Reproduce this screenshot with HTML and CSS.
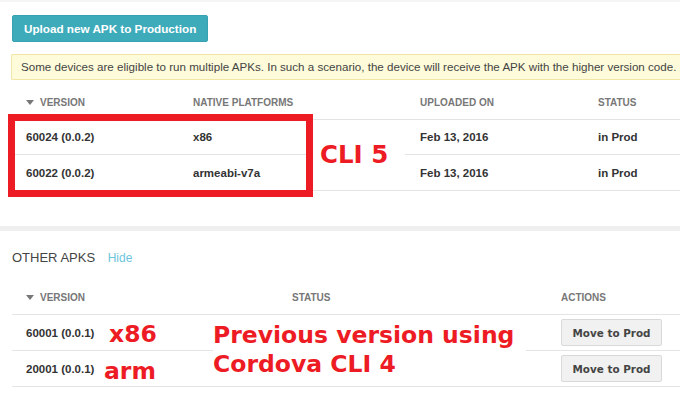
FILE: index.html
```html
<!DOCTYPE html>
<html lang="en">
<head>
  <meta charset="UTF-8">
  <title>APK</title>
  <link rel="stylesheet" href="styles.css">
</head>
<body>
  <div class="section">
    <button class="upload-btn">Upload new APK to Production</button>
    <div class="notice">Some devices are eligible to run multiple APKs. In such a scenario, the device will receive the APK with the higher version code.</div>

    <div class="table prod">
      <div class="row head">
        <div><span class="sort"></span>VERSION</div>
        <div>NATIVE PLATFORMS</div>
        <div>UPLOADED ON</div>
        <div>STATUS</div>
      </div>
      <div class="row">
        <div>60024 (0.0.2)</div>
        <div>x86</div>
        <div>Feb 13, 2016</div>
        <div>in Prod</div>
      </div>
      <div class="row">
        <div>60022 (0.0.2)</div>
        <div>armeabi-v7a</div>
        <div>Feb 13, 2016</div>
        <div>in Prod</div>
      </div>
    </div>
  </div>

  <div class="band"></div>

  <div class="section other">
    <h2 class="title">OTHER APKS <a class="hide">Hide</a></h2>
    <div class="table others">
      <div class="row head">
        <div><span class="sort"></span>VERSION</div>
        <div>STATUS</div>
        <div>ACTIONS</div>
      </div>
      <div class="row">
        <div>60001 (0.0.1)</div>
        <div></div>
        <div><button class="move-btn">Move to Prod</button></div>
      </div>
      <div class="row">
        <div>20001 (0.0.1)</div>
        <div></div>
        <div><button class="move-btn">Move to Prod</button></div>
      </div>
    </div>
  </div>

  <!-- annotations drawn over the page -->
  <div class="mark-box"></div>
  <div class="note cli5">CLI 5</div>
  <div class="note x86">x86</div>
  <div class="note arm">arm</div>
  <div class="note prev">Previous version using<br>Cordova CLI 4</div>
</body>
</html>
```

FILE: styles.css
```css
body {
  margin: 0;
  font-family: "Liberation Sans", Arial, sans-serif;
  color: #333;
  background: #fff;
  border-top: 2px solid #f5f5f5;
  position: relative;
}
.section {
  padding-left: 12px;
}
.upload-btn {
  display: block;
  margin-top: 13px;
  height: 27px;
  padding: 0 11px;
  border: 1px solid #37a3b2;
  border-radius: 2px;
  background: #3eabbb;
  color: #fff;
  font-family: "Liberation Sans", Arial, sans-serif;
  font-weight: bold;
  font-size: 11.7px;
}
.notice {
  margin: 12px 0 0 -1px;
  height: 26px;
  box-sizing: border-box;
  border: 1px solid #f2e6a6;
  border-right: none;
  border-radius: 2px 0 0 2px;
  background: #fdfbd9;
  padding-left: 9px;
  line-height: 24px;
  font-size: 11.6px;
  color: #444;
  white-space: nowrap;
  overflow: hidden;
}
.table {
  margin-top: 5px;
}
.row {
  display: grid;
  align-items: center;
  height: 34px;
  padding-left: 14px;
  border-bottom: 1px solid #e4e4e4;
  font-weight: bold;
  font-size: 11.5px;
  color: #333;
}
.row:last-child {
  height: 35px;
}
.prod .row {
  grid-template-columns: 167px 227px 178px 1fr;
}
.others .row {
  grid-template-columns: 266px 269px 1fr;
}
.row.head {
  font-size: 10px;
  color: #777;
}
.sort {
  display: inline-block;
  width: 0;
  height: 0;
  border-left: 4px solid transparent;
  border-right: 4px solid transparent;
  border-top: 5px solid #777;
  margin-right: 6px;
  vertical-align: 1px;
}
.band {
  height: 5px;
  margin-top: 35px;
  background: #efefef;
}
.title {
  margin: 17px 0 0;
  line-height: 20px;
  font-size: 13px;
  font-weight: normal;
  color: #444;
}
.hide {
  margin-left: 9px;
  font-size: 12px;
  color: #6cc5dc;
}
.other .table {
  margin-top: 12px;
}
.other .row:nth-child(2) {
  height: 35px;
}
.move-btn {
  height: 27px;
  width: 101px;
  border: 1px solid #d9d9d9;
  border-radius: 2px;
  background: #f1f1f1;
  font-family: "DejaVu Sans", Verdana, sans-serif;
  font-weight: bold;
  font-size: 10.4px;
  color: #444;
  padding: 0;
}
.mark-box {
  position: absolute;
  left: 8px;
  top: 112px;
  width: 305px;
  height: 83px;
  box-sizing: border-box;
  border: 7px solid #ed1c24;
}
.note {
  position: absolute;
  font-family: "DejaVu Sans", Verdana, sans-serif;
  font-weight: bold;
  font-size: 23.5px;
  line-height: 26px;
  color: #ed1c24;
}
.cli5 {
  left: 313px;
  top: 128px;
  padding: 12px 17px 12px 7px;
  font-size: 24.5px;
  background: #fff;
}
.x86 {
  left: 109px;
  top: 319px;
}
.arm {
  left: 104px;
  top: 356px;
}
.prev {
  left: 213px;
  top: 319px;
  padding-right: 12px;
  line-height: 29px;
  background: #fff;
}
```
